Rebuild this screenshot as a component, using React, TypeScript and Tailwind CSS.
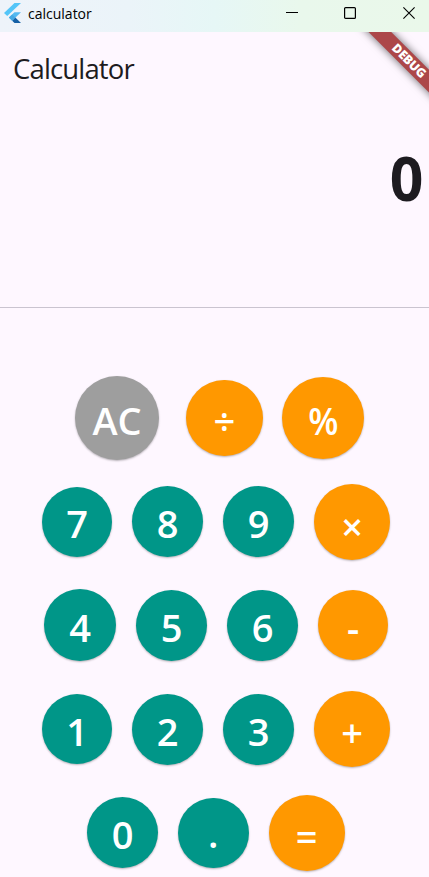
type KeyProps = { label: string; tone: 'grey' | 'teal' | 'orange'; size: string; text?: string };

const tones = {
  grey: 'bg-[#9e9e9e]',
  teal: 'bg-[#009688]',
  orange: 'bg-[#ff9800]',
};

function Key({ label, tone, size, text = '' }: KeyProps) {
  return (
    <button
      className={`flex shrink-0 items-center justify-center rounded-full text-[38px] leading-none font-semibold text-white shadow-[0_1px_2px_rgba(0,0,0,0.28)] ${tones[tone]} ${size}`}
    >
      <span className={text || 'pt-[3px]'}>{label}</span>
    </button>
  );
}

function FlutterLogo() {
  return (
    <svg className="h-5 w-[17px]" viewBox="2.3 0 19.4 24" preserveAspectRatio="none">
      <path d="M14.3 0 2.3 12 6 15.7 21.7 0z" fill="#54c5f8" />
      <path d="M14.3 11.1 7.9 17.5l3.7 3.7L21.7 11.1z" fill="#54b9f0" />
      <path d="m11.6 21.2 2.7 2.8h7.4l-6.5-6.5z" fill="#1560a5" />
      <path d="m7.9 17.5 3.7-3.7 3.6 3.7-3.6 3.7z" fill="#45a9e4" />
    </svg>
  );
}

function TitleBar() {
  return (
    <header className="flex h-8 items-center bg-[linear-gradient(90deg,#eef3fa_0%,#ebf4f9_30%,#e6f7f6_50%,#e9f8ec_70%,#eaf8ea_100%)] text-black">
      <div className="mb-1.5 ml-1">
        <FlutterLogo />
      </div>
      <span className="mb-1 ml-[7px] text-[14px] leading-5">calculator</span>
      <svg className="mb-1.5 ml-auto h-3 w-3" viewBox="0 0 12 12" fill="none" stroke="currentColor">
        <path d="M0 5.5h12" />
      </svg>
      <svg className="mb-1.5 ml-[46px] h-3 w-3" viewBox="0 0 12 12" fill="none" stroke="currentColor" strokeWidth="1.2">
        <rect x=".6" y=".6" width="10.8" height="10.8" rx="1" />
      </svg>
      <svg className="mr-[14px] mb-1.5 ml-[47px] h-3 w-3" viewBox="0 0 12 12" fill="none" stroke="currentColor" strokeWidth="1.1">
        <path d="m.4.4 11.2 11.2M11.6.4.4 11.6" />
      </svg>
    </header>
  );
}

export default function App() {
  return (
    <div className="flex h-[877px] w-[429px] flex-col overflow-hidden bg-[#fef7ff] font-['Open_Sans','Noto_Sans',sans-serif] text-[#1d1b20]">
      <TitleBar />
      <main className="relative flex flex-1 flex-col overflow-hidden">
        <div className="absolute top-[21.5px] left-[349.5px] flex h-[15.5px] w-[120px] rotate-45 items-center justify-center bg-[#ac4749] text-[12.5px] leading-none font-extrabold text-white shadow-[0_0_8px_rgba(0,0,0,0.6)]">
          <span className="mr-[3px] tracking-[-0.25px]">DEBUG</span>
        </div>
        <h1 className="mt-[18px] ml-[13px] text-[27.5px] leading-[37px] tracking-[-0.85px]">Calculator</h1>
        <div className="mt-[51px] pr-[5.5px] text-right text-[60px] leading-[80px] font-bold">
          <span className="inline-block origin-right scale-x-[0.98]">0</span>
        </div>
        <hr className="mt-[88.5px] border-[#cac4d0]" />
        <section className="mt-[68.3px] flex flex-col gap-[19.8px]">
          <div className="flex h-[84px] items-center gap-[19.5px] pl-[75px]">
            <Key label="AC" tone="grey" size="mr-[7.5px] size-[84px]" text="pt-[4px]" />
            <Key label="÷" tone="orange" size="size-[76.5px]" text="pt-[5px]" />
            <Key label="%" tone="orange" size="size-[82px]" text="scale-x-[0.92] pt-[4px]" />
          </div>
          <div className="flex h-[84px] items-center gap-5 pl-[42px]">
            <Key label="7" tone="teal" size="size-[70px]" />
            <Key label="8" tone="teal" size="size-[71px]" />
            <Key label="9" tone="teal" size="size-[71px]" />
            <Key label="×" tone="orange" size="size-[76px]" text="pt-[8px]" />
          </div>
          <div className="flex h-[84px] items-center gap-5 pl-[44px]">
            <Key label="4" tone="teal" size="size-[72px]" />
            <Key label="5" tone="teal" size="size-[71px]" />
            <Key label="6" tone="teal" size="size-[71px]" />
            <Key label="-" tone="orange" size="size-[70px]" text="pt-[3px]" />
          </div>
          <div className="flex h-[84px] items-center gap-5 pl-[42px]">
            <Key label="1" tone="teal" size="size-[70px]" />
            <Key label="2" tone="teal" size="size-[71px]" />
            <Key label="3" tone="teal" size="size-[71px]" />
            <Key label="+" tone="orange" size="size-[76px]" text="pt-[6px]" />
          </div>
          <div className="flex h-[84px] items-center gap-5 pl-[87px]">
            <Key label="0" tone="teal" size="size-[71px]" />
            <Key label="." tone="teal" size="size-[70.5px]" text="pt-[1px]" />
            <Key label="=" tone="orange" size="size-[76px]" text="pt-[6px]" />
          </div>
        </section>
      </main>
    </div>
  );
}
